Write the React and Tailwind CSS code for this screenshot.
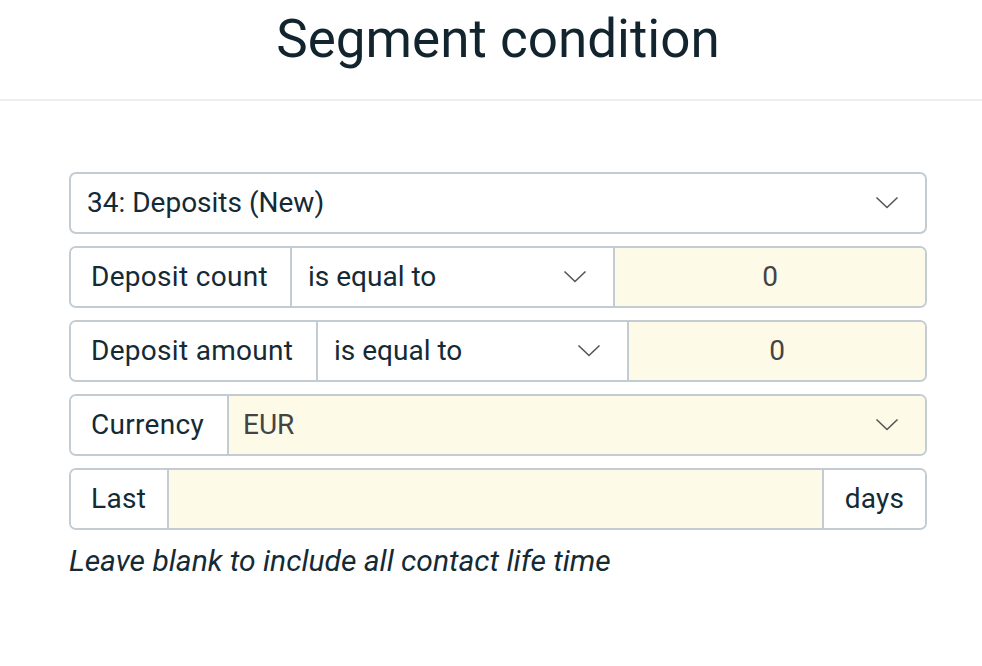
import React from 'react';

const Chevron = () => (
  <svg width="24" height="14" viewBox="0 0 24 14" fill="none" className="shrink-0">
    <path d="M1.5 1.5 L12 11.5 L22.5 1.5" stroke="#555" strokeWidth="1.6" />
  </svg>
);

const rowCls = 'flex h-[62px] border-2 border-[#c3ccd3] rounded-[7px] overflow-hidden';
const labelCls = 'flex items-center px-[20px] text-[28px] tracking-[0.3px] text-[#142a35] bg-white shrink-0';

export default function App() {
  return (
    <div className="min-h-screen bg-white font-['Roboto',sans-serif]">
      {/* Header */}
      <div className="h-[101px] border-b-2 border-[#eeeeee] flex items-center">
        <div className="ml-[69px] w-[858px] text-center text-[53px] text-[#12252f] pb-[20px]">
          Segment condition
        </div>
      </div>

      {/* Form */}
      <div className="ml-[69px] w-[858px] pt-[71px] flex flex-col gap-[12px]">
        <div className={rowCls}>
          <div className="flex-1 flex items-center justify-between pl-[16px] pr-[26px] text-[28px] text-[#142a35]">
            <span>34: Deposits (New)</span>
            <Chevron />
          </div>
        </div>

        <div className={rowCls}>
          <div className={labelCls + ' w-[219px]'}>Deposit count</div>
          <div className="w-[323px] border-l-2 border-[#c3ccd3] flex items-center justify-between pl-[16px] pr-[26px] text-[28px] text-[#142a35]">
            <span>is equal to</span>
            <Chevron />
          </div>
          <div className="flex-1 border-l-2 border-[#c3ccd3] bg-[#fdfae8] flex items-center justify-center text-[28px] text-[#444]">
            0
          </div>
        </div>

        <div className={rowCls}>
          <div className={labelCls + ' w-[245px]'}>Deposit amount</div>
          <div className="w-[311px] border-l-2 border-[#c3ccd3] flex items-center justify-between pl-[16px] pr-[26px] text-[28px] text-[#142a35]">
            <span>is equal to</span>
            <Chevron />
          </div>
          <div className="flex-1 border-l-2 border-[#c3ccd3] bg-[#fdfae8] flex items-center justify-center text-[28px] text-[#444]">
            0
          </div>
        </div>

        <div className={rowCls}>
          <div className={labelCls + ' w-[156px]'}>Currency</div>
          <div className="flex-1 border-l-2 border-[#c3ccd3] bg-[#fdfae8] flex items-center justify-between pl-[14px] pr-[26px] text-[28px] text-[#444]">
            <span>EUR</span>
            <Chevron />
          </div>
        </div>

        <div className={rowCls}>
          <div className={labelCls + ' w-[96px]'}>Last</div>
          <div className="flex-1 border-l-2 border-[#c3ccd3] bg-[#fdfae8]" />
          <div className={labelCls + ' w-[103px] border-l-2 border-[#c3ccd3] justify-center'}>days</div>
        </div>

        <div className="-mt-[4px] italic text-[30px] text-[#142a35]">
          Leave blank to include all contact life time
        </div>
      </div>
    </div>
  );
}
